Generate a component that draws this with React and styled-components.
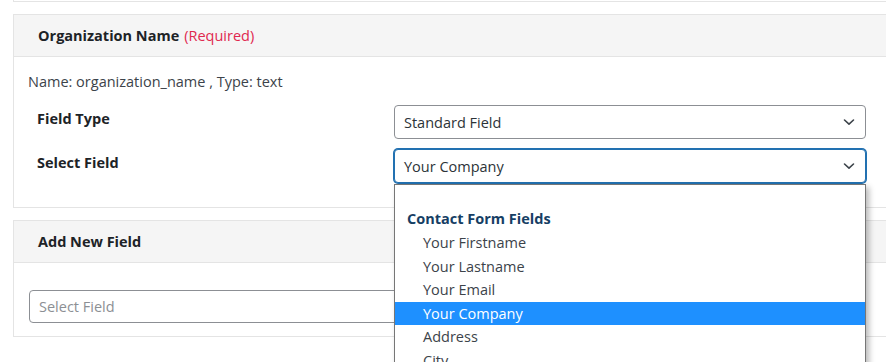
import React from 'react'
import styled, { createGlobalStyle } from 'styled-components'

const GlobalStyle = createGlobalStyle`
  html, body {
    margin: 0;
    padding: 0;
    background: #fff;
    overflow: hidden;
  }
  body {
    font-family: "Open Sans", "Noto Sans", Arial, sans-serif;
    font-size: 14.5px;
    color: #2c3338;
  }
`

const Page = styled.div`
  width: 886px;
  height: 362px;
  overflow: hidden;
  padding-left: 13px;
  box-sizing: border-box;
`

const Card = styled.div`
  width: 900px;
  background: #fff;
  border: 1px solid #e4e4e4;
  border-top: ${p => (p.$clipped ? 'none' : '1px solid #e4e4e4')};
  height: ${p => (p.$clipped ? '1px' : 'auto')};
  margin-bottom: 12px;
`

const CardHeader = styled.div`
  height: 41px;
  display: flex;
  align-items: center;
  padding-left: 24px;
  background: #f5f5f5;
  border-bottom: 1px solid #e4e4e4;
  font-weight: 700;
  color: #1d2327;
`

const Required = styled.span`
  font-weight: 400;
  color: #e0284f;
  margin-left: 5px;
`

const CardBody = styled.div`
  padding: ${p => p.$padding};
`

const Meta = styled.div`
  line-height: 20px;
  color: #3c434a;
  margin-bottom: 13px;
`

const FieldRow = styled.div`
  display: flex;
  align-items: flex-start;
  & + & {
    margin-top: 10px;
  }
`

const Label = styled.div`
  width: 366px;
  box-sizing: border-box;
  padding: 4px 0 0 9px;
  line-height: 20px;
  font-weight: 700;
  color: #1d2327;
`

const SelectWrap = styled.div`
  position: relative;
  width: 472px;
`

const SelectBox = styled.div`
  height: 34px;
  box-sizing: border-box;
  display: flex;
  align-items: center;
  justify-content: space-between;
  padding: 0 9px;
  background: #fff;
  border: 1px solid ${p => (p.$focused ? '#2271b1' : '#8c8f94')};
  box-shadow: ${p => (p.$focused ? '0 0 0 1px #2271b1' : 'none')};
  border-radius: 4px;
  color: #2c3338;
`

const Chevron = () => (
  <svg width="14" height="14" viewBox="0 0 14 14" fill="none">
    <path d="M2.5 5 L7 9.2 L11.5 5" stroke="#3c434a" strokeWidth="1.6" strokeLinecap="round" strokeLinejoin="round" />
  </svg>
)

const Input = styled.div`
  width: 800px;
  height: 33px;
  box-sizing: border-box;
  display: flex;
  align-items: center;
  padding: 0 9px;
  border: 1px solid #8c8f94;
  border-radius: 4px;
  color: #8c8f94;
`

const Dropdown = styled.div`
  position: absolute;
  top: 100%;
  left: 0;
  width: 472px;
  height: 200px;
  box-sizing: border-box;
  margin-top: 1px;
  padding-top: 22px;
  background: #fff;
  border: 1px solid #767676;
  box-shadow: 3px 3px 6px rgba(0, 0, 0, 0.28);
  z-index: 5;
`

const GroupTitle = styled.div`
  line-height: 24px;
  padding-left: 12px;
  font-weight: 700;
  color: #163e64;
`

const Option = styled.div`
  line-height: 23.5px;
  height: 23.5px;
  padding-left: 28px;
  background: ${p => (p.$active ? '#1e90ff' : 'transparent')};
  color: ${p => (p.$active ? '#fff' : '#3c434a')};
`

const options = ['Your Firstname', 'Your Lastname', 'Your Email', 'Your Company', 'Address', 'City', 'State']

export default function App() {
  return (
    <Page>
      <GlobalStyle />
      <Card $clipped />
      <Card>
        <CardHeader>
          Organization Name<Required>(Required)</Required>
        </CardHeader>
        <CardBody $padding="15px 14px 24px">
          <Meta>Name: organization_name , Type: text</Meta>
          <FieldRow>
            <Label>Field Type</Label>
            <SelectWrap>
              <SelectBox>
                Standard Field
                <Chevron />
              </SelectBox>
            </SelectWrap>
          </FieldRow>
          <FieldRow>
            <Label>Select Field</Label>
            <SelectWrap>
              <SelectBox $focused>
                Your Company
                <Chevron />
              </SelectBox>
              <Dropdown>
                <GroupTitle>Contact Form Fields</GroupTitle>
                {options.map(o => (
                  <Option key={o} $active={o === 'Your Company'}>{o}</Option>
                ))}
              </Dropdown>
            </SelectWrap>
          </FieldRow>
        </CardBody>
      </Card>
      <Card>
        <CardHeader>Add New Field</CardHeader>
        <CardBody $padding="27px 15px 13px">
          <Input>Select Field</Input>
        </CardBody>
      </Card>
    </Page>
  )
}
